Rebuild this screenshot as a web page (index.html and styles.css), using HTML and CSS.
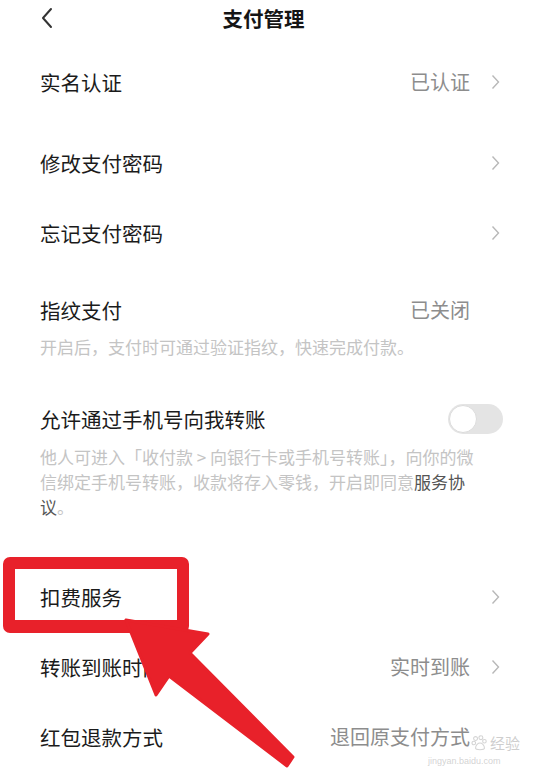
FILE: index.html
```html
<!DOCTYPE html>
<html lang="zh-CN">
<head>
<meta charset="utf-8">
<title>支付管理</title>
<link rel="stylesheet" href="styles.css">
</head>
<body>
<div class="page">
  <header class="header">
    <span class="back">
      <svg width="14" height="22" viewBox="0 0 14 22"><polyline points="11,2 3,11 11,20" fill="none" stroke="#333" stroke-width="2" stroke-linecap="round" stroke-linejoin="round"/></svg>
    </span>
    <h1 class="title">支付管理</h1>
    <span></span>
  </header>

  <div class="row">
    <span class="label">实名认证</span>
    <span class="right"><span class="value">已认证</span><span class="chev"><svg width="9" height="16" viewBox="0 0 9 16"><polyline points="1.5,1.5 7.5,8 1.5,14.5" fill="none" stroke="#b8b8b8" stroke-width="1.4"/></svg></span></span>
  </div>

  <div class="row gap-l">
    <span class="label">修改支付密码</span>
    <span class="right"><span class="chev"><svg width="9" height="16" viewBox="0 0 9 16"><polyline points="1.5,1.5 7.5,8 1.5,14.5" fill="none" stroke="#b8b8b8" stroke-width="1.4"/></svg></span></span>
  </div>

  <div class="row">
    <span class="label">忘记支付密码</span>
    <span class="right"><span class="chev"><svg width="9" height="16" viewBox="0 0 9 16"><polyline points="1.5,1.5 7.5,8 1.5,14.5" fill="none" stroke="#b8b8b8" stroke-width="1.4"/></svg></span></span>
  </div>

  <div class="item gap-s">
    <div class="row-head">
      <span class="label">指纹支付</span>
      <span class="right"><span class="value">已关闭</span><span class="chev"></span></span>
    </div>
    <p class="desc">开启后，支付时可通过验证指纹，快速完成付款。</p>
  </div>

  <div class="item gap-xs">
    <div class="row-head">
      <span class="label">允许通过手机号向我转账</span>
      <span class="toggle"><span class="knob"></span></span>
    </div>
    <p class="desc">他人可进入「收付款 &gt; 向银行卡或手机号转账」，向你的微<br>信绑定手机号转账，收款将存入零钱，开启即同意<span class="link">服务协<br>议</span>。</p>
  </div>

  <div class="row gap-xl">
    <span class="label">扣费服务</span>
    <span class="right"><span class="chev"><svg width="9" height="16" viewBox="0 0 9 16"><polyline points="1.5,1.5 7.5,8 1.5,14.5" fill="none" stroke="#b8b8b8" stroke-width="1.4"/></svg></span></span>
  </div>

  <div class="row">
    <span class="label">转账到账时间</span>
    <span class="right"><span class="value">实时到账</span><span class="chev"><svg width="9" height="16" viewBox="0 0 9 16"><polyline points="1.5,1.5 7.5,8 1.5,14.5" fill="none" stroke="#b8b8b8" stroke-width="1.4"/></svg></span></span>
  </div>

  <div class="row">
    <span class="label">红包退款方式</span>
    <span class="right"><span class="value">退回原支付方式</span><span class="chev"></span></span>
  </div>

  <div class="watermark">
    <span class="wm-logo">
      <svg width="18" height="16" viewBox="0 0 20 18"><g fill="none" stroke="#d4d4d4" stroke-width="1.2"><circle cx="5" cy="4" r="2.2"/><circle cx="11" cy="3" r="2.2"/><circle cx="3" cy="9" r="2"/><circle cx="15" cy="7" r="2"/><path d="M5 15c0-4 3-6 5-6s5 2 5 6c0 2-10 2-10 0z"/></g></svg>
      <span class="wm-text">经验</span>
    </span>
  </div>
  <span class="wm-url">jingyan.baidu.com</span>

  <div class="highlight"></div>
  <svg class="arrow" width="537" height="775" viewBox="0 0 537 775">
    <polygon points="126,620 208,634 190,653 293,757 287,766 169,676 156,695" fill="#e8212a" stroke="#e8212a" stroke-width="3" stroke-linejoin="round"/>
  </svg>
</div>
</body>
</html>
```

FILE: styles.css
```css
* { box-sizing: border-box; }

html, body {
  margin: 0;
  padding: 0;
  background: #ffffff;
}

body {
  font-family: "Noto Sans CJK SC", "Noto Sans", sans-serif;
  color: #1b1b1b;
}

.page {
  position: relative;
  width: 537px;
  height: 775px;
  overflow: hidden;
  background: #fff;
}

.header {
  display: grid;
  grid-template-columns: 1fr auto 1fr;
  align-items: center;
  height: 47px;
  padding: 0 50px 12px 40px;
}

.back {
  display: flex;
  align-items: center;
  height: 22px;
}

.title {
  margin: 0;
  font-size: 20.5px;
  font-weight: 700;
  line-height: 28px;
  color: #151515;
}

.row,
.row-head {
  display: flex;
  align-items: center;
  justify-content: space-between;
  line-height: 28px;
}

.row {
  padding: 21px 37px 21px 40px;
}

.item {
  padding: 21px 37px 21px 40px;
}

.gap-xs { margin-top: 3px; }
.gap-s { margin-top: 7px; }
.gap-l { margin-top: 11px; }
.gap-xl { margin-top: 22px; }

.label {
  font-size: 20.5px;
  color: #1b1b1b;
}

.right {
  display: flex;
  align-items: center;
}

.value {
  font-size: 20px;
  color: #8d8d8d;
}

.chev {
  display: flex;
  align-items: center;
  justify-content: flex-end;
  width: 30px;
  height: 16px;
}

.desc {
  margin: 10px 0 0;
  font-size: 17px;
  line-height: 25px;
  color: #c4c4c4;
  white-space: nowrap;
}

.link {
  color: #555;
}

.toggle {
  display: flex;
  align-items: center;
  width: 55px;
  height: 30px;
  margin-right: -3px;
  border-radius: 15px;
  background: #e4e4e4;
  padding: 1px;
}

.knob {
  width: 28px;
  height: 28px;
  border-radius: 50%;
  background: #fff;
  border: 1px solid #dcdcdc;
}

.watermark {
  position: absolute;
  left: 471px;
  top: 733px;
  display: flex;
  align-items: center;
}

.wm-logo {
  display: flex;
  align-items: center;
  gap: 1px;
}

.wm-text {
  font-size: 15px;
  line-height: 20px;
  color: rgba(190, 190, 190, 0.75);
}

.wm-url {
  position: absolute;
  left: 428px;
  top: 756px;
  font-family: "Liberation Sans", sans-serif;
  font-size: 9px;
  line-height: 11px;
  color: rgba(200, 200, 200, 0.8);
}

.highlight {
  position: absolute;
  left: 3px;
  top: 557px;
  width: 186px;
  height: 76px;
  border: 12px solid #e8212a;
  border-bottom-width: 13px;
  border-radius: 7px;
}

.arrow {
  position: absolute;
  left: 0;
  top: 0;
  pointer-events: none;
}
```
